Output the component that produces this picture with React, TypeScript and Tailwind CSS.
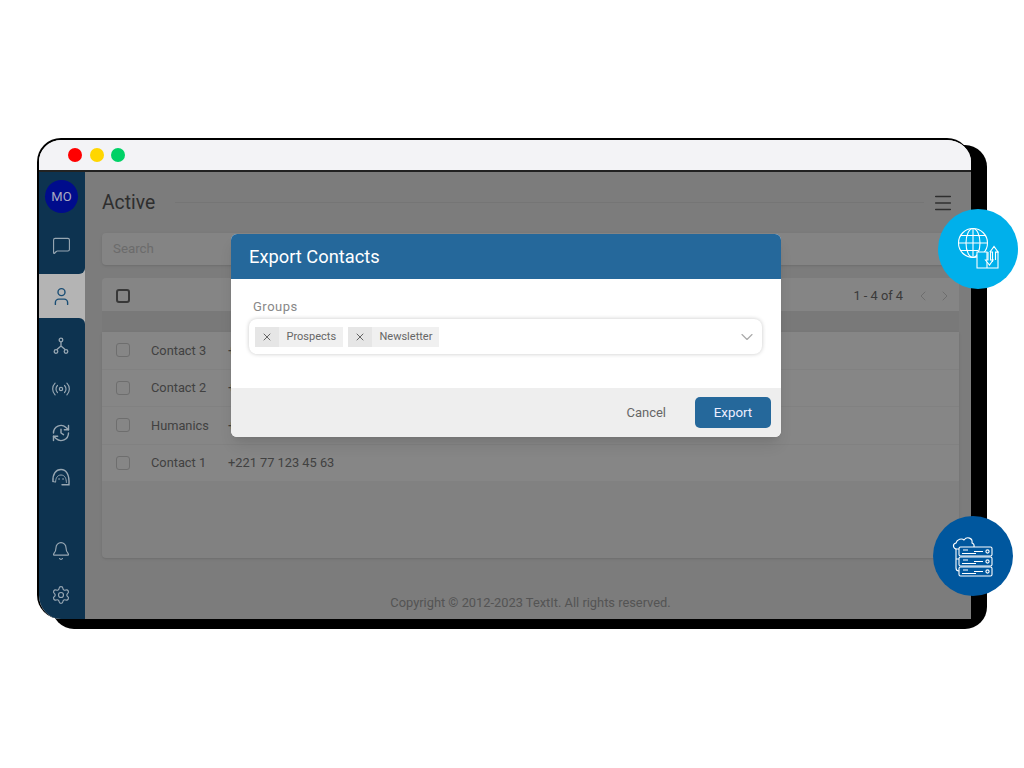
import { Bell, ChevronDown, ChevronLeft, ChevronRight, Menu, MessageSquare, Radio, Settings, User, X } from "lucide-react";

const contacts = [
  { name: "Contact 3", phone: "+221 77 123 45 66" },
  { name: "Contact 2", phone: "+221 77 123 45 65" },
  { name: "Humanics", phone: "+221 77 123 45 64" },
  { name: "Contact 1", phone: "+221 77 123 45 63" },
];

const FlowIcon = () => (
  <svg width="16" height="18" viewBox="0 0 16 18" fill="none" stroke="currentColor" strokeWidth="1.3">
    <circle cx="8" cy="3" r="1.8" />
    <circle cx="3" cy="14.5" r="1.8" />
    <circle cx="13" cy="14.5" r="1.8" />
    <path d="M8 4.8V9M8 9L3.6 12.8M8 9L12.4 12.8" />
  </svg>
);

const HeadsetIcon = () => (
  <svg width="20" height="20" viewBox="0 0 20 20" fill="none" stroke="currentColor" strokeWidth="1.4" strokeLinecap="round">
    <path d="M2 14.5C1.4 7 5 2.5 10 2.5C15 2.5 18.6 7 18 17.8H11" />
    <path d="M2 14.5L4.6 15.2C4.6 11.5 6.2 8 10 8C13.8 8 15.4 11.5 15.4 15.4" strokeWidth="1" />
    <path d="M8 12H8.1M12 12H12.1" strokeWidth="1.6" />
  </svg>
);

const ClockRefreshIcon = () => (
  <svg width="20" height="20" viewBox="0 0 24 24" fill="none" stroke="currentColor" strokeWidth="1.7" strokeLinecap="round" strokeLinejoin="round">
    <path d="M3 12a9 9 0 0 1 15-6.7L21 8" />
    <path d="M21 3v5h-5" />
    <path d="M21 12a9 9 0 0 1-15 6.7L3 16" />
    <path d="M3 21v-5h5" />
    <path d="M12 7.5V12l3 2" />
  </svg>
);

const GlobeIcon = () => (
  <svg width="44" height="44" viewBox="0 0 44 44" fill="none" stroke="white" strokeWidth="1.1">
    <circle cx="17" cy="16" r="14.5" />
    <ellipse cx="17" cy="16" rx="7" ry="14.5" />
    <path d="M17 1.5V30.5M2.5 16H31.5M4.5 8.5H29.5M4.5 23.5H22" />
    <path d="M21 25H31V41H21ZM31 41H42V25H40" fill="#00b0eb" />
    <path d="M36.5 35V25H34L38 19.5L42 25H39.5V33" fill="#00b0eb" />
    <path d="M32 25V33H29.5L33.5 38L37 33H34.5V25" fill="#00b0eb" />
  </svg>
);

const ServersIcon = () => (
  <svg width="42" height="42" viewBox="0 0 42 42" fill="none" stroke="white" strokeWidth="1.1">
    <path d="M5 14C1 14 0 9 4 8C5 4 10 3 12 5C15 1 21 3 20 8C23 9 23 14 19 14Z" />
    <path d="M4 14V33C4 35 5 36 7 36M4 24H7" />
    <rect x="7" y="12" width="33" height="9" rx="1.5" fill="#00579e" />
    <rect x="7" y="22" width="33" height="9" rx="1.5" fill="#00579e" />
    <rect x="7" y="32" width="33" height="9" rx="1.5" fill="#00579e" />
    <path d="M11 15H16M22 16.5H31M11 25H16M22 26.5H31M11 35H16M22 36.5H31M10 18.5H24M10 28.5H24M10 38.5H24" />
    <circle cx="35.5" cy="16.5" r="1.6" />
    <circle cx="35.5" cy="26.5" r="1.6" />
    <circle cx="35.5" cy="36.5" r="1.6" />
  </svg>
);

const Tag = ({ label, width }: { label: string; width: string }) => (
  <div className={`flex h-5 ${width} items-center bg-[#f0f0f0] text-[11px] text-[#666]`}>
    <div className="flex h-5 w-6 shrink-0 items-center justify-center bg-[#e6e6e6]">
      <X size={12} strokeWidth={1.8} className="text-[#555]" />
    </div>
    <span className="mt-[2px] pl-[7.5px]">{label}</span>
  </div>
);

const SideItem = ({ children, className = "" }: { children: React.ReactNode; className?: string }) => (
  <div className={`flex items-center justify-center pr-[2px] text-[#f4f4f4] opacity-60 ${className}`}>{children}</div>
);

export default function App() {
  return (
    <div className="h-[768px] w-[1024px] overflow-hidden bg-white pl-[37px] pt-[138px] font-['Roboto',sans-serif]">
      <div className="relative h-[481px] w-[934px]">
        {/* black offset behind the window */}
        <div className="absolute left-[15px] top-[7px] h-[484px] w-[935px] rounded-[22px] bg-black" />

        <div className="relative flex h-[481px] w-[934px] flex-col overflow-hidden rounded-t-[24px] rounded-bl-[24px] border-2 border-b-0 border-r-0 border-black bg-white">
          <div className="flex h-[32px] shrink-0 items-center gap-[7.5px] border-b-2 border-[#222] bg-[#f3f3f6] pl-[29px]">
            <span className="h-[14px] w-[14px] rounded-full bg-[#ff0000]" />
            <span className="h-[14px] w-[14px] rounded-full bg-[#ffd600]" />
            <span className="h-[14px] w-[14px] rounded-full bg-[#00d166]" />
          </div>

          <div className="relative flex min-h-0 flex-1">
            {/* sidebar */}
            <div className="relative z-10 flex w-[46px] shrink-0 flex-col bg-[#b4b4b4]">
              <div className="h-[102px] shrink-0 rounded-br-[6px] bg-[#0d3350] pt-[8px]">
                <div className="ml-[6px] flex h-[33px] w-[33px] items-center justify-center rounded-full bg-[#000c8c] text-[13px] text-[#a8a8c0]">
                  MO
                </div>
                <SideItem className="mt-[20px] h-[24px]">
                  <MessageSquare size={19} strokeWidth={1.4} />
                </SideItem>
              </div>
              <div className="flex h-[44px] shrink-0 items-center justify-center pr-[2px] text-[#1a4e75]">
                <User size={21} strokeWidth={1.6} />
              </div>
              <div className="min-h-0 flex-1 rounded-tr-[6px] bg-[#0d3350]">
                <SideItem className="mt-[18px] h-[20px]">
                  <FlowIcon />
                </SideItem>
                <SideItem className="mt-[23px] h-[20px]">
                  <Radio size={20} strokeWidth={1.4} />
                </SideItem>
                <SideItem className="mt-[24px] h-[20px]">
                  <ClockRefreshIcon />
                </SideItem>
                <SideItem className="mt-[24px] h-[20px]">
                  <HeadsetIcon />
                </SideItem>
                <SideItem className="mt-[54px] h-[20px]">
                  <Bell size={20} strokeWidth={1.4} />
                </SideItem>
                <SideItem className="mt-[24px] h-[20px]">
                  <Settings size={20} strokeWidth={1.4} />
                </SideItem>
              </div>
            </div>

            {/* contacts page */}
            <div className="flex min-w-0 flex-1 flex-col bg-[#e2e2e2] pl-[17px] pr-[12px]">
              <div className="flex h-[61px] shrink-0 items-center">
                <h1 className="mt-[1px] text-[19.3px] text-[#555]">Active</h1>
                <div className="ml-[20px] h-px flex-1 bg-[#d6d6d6]" />
                <Menu size={22} strokeWidth={1.6} className="ml-[8px] mr-[5px] text-[#555]" />
              </div>
              <div className="flex h-[32px] shrink-0 items-center rounded bg-[#f0f0f0] pl-[11px] text-[13.3px] text-[#c4c4c4] shadow-sm">
                Search
              </div>
              <div className="mt-[13px] flex h-[33px] shrink-0 items-center justify-between rounded-t bg-[#f2f2f2] pl-[14px] pr-[6px] pt-[3px]">
                <span className="h-[14px] w-[14px] rounded-[3px] border-2 border-[#666]" />
                <div className="flex items-center gap-[6px] text-[12.8px] text-[#6a6a6a]">
                  1 - 4 of 4
                  <ChevronLeft size={16} strokeWidth={1.3} className="ml-[6px] text-[#c0c0c0]" />
                  <ChevronRight size={16} strokeWidth={1.3} className="text-[#c0c0c0]" />
                </div>
              </div>
              <div className="h-[21px] shrink-0 bg-[#dcdcdc]" />
              <div className="h-[226px] shrink-0 rounded-b bg-[#ebebeb] shadow-sm">
                {contacts.map((c) => (
                  <div key={c.name} className="flex h-[37.5px] items-center border-b border-[#ebebeb] bg-[#f4f4f4] pl-[14px] text-[12.8px] text-[#777]">
                    <span className="h-[14px] w-[14px] rounded-[3px] border border-[#c8c8c8]" />
                    <span className="ml-[21px] w-[77px]">{c.name}</span>
                    <span>{c.phone}</span>
                  </div>
                ))}
              </div>
              <div className="flex flex-1 items-end justify-center pb-[7px] text-[12.85px] text-[#999]">
                Copyright © 2012-2023 TextIt. All rights reserved.
              </div>
            </div>

            {/* dialog backdrop */}
            <div className="absolute inset-0 bg-black/45" />

            {/* export dialog */}
            <div className="absolute left-[192px] top-[62px] flex h-[203px] w-[550px] flex-col overflow-hidden rounded-[6px] bg-white shadow-lg">
              <div className="flex h-[45px] shrink-0 items-center bg-[#25689b] pl-[18px] text-[18.3px] text-white">
                Export Contacts
              </div>
              <div className="flex-1 pl-[18px] pr-[19px] pt-[21px]">
                <div className="pl-[4px] text-[13px] leading-[14px] tracking-[0.5px] text-[#888]">Groups</div>
                <div className="mt-[5px] flex h-[35px] items-center gap-[5px] rounded-lg bg-white pl-[6px] pr-[5px] shadow-[0_0_4px_rgba(0,0,0,0.22)]">
                  <Tag label="Prospects" width="w-[88px]" />
                  <Tag label="Newsletter" width="w-[91px]" />
                  <ChevronDown size={20} strokeWidth={1.4} className="ml-auto text-[#aaa]" />
                </div>
              </div>
              <div className="flex h-[49px] shrink-0 items-center justify-end bg-[#eeeeee] pr-[10px]">
                <span className="text-[13px] text-[#666]">Cancel</span>
                <button className="ml-[29px] h-[31px] w-[76px] rounded-[5px] bg-[#25689b] text-[13.3px] text-[#eef]">Export</button>
              </div>
            </div>
          </div>
        </div>

        {/* floating badges */}
        <div className="absolute left-[901px] top-[71px] flex h-[80px] w-[80px] items-center justify-center rounded-full bg-[#00b0eb]">
          <GlobeIcon />
        </div>
        <div className="absolute left-[896px] top-[378px] flex h-[80px] w-[80px] items-center justify-center rounded-full bg-[#00579e]">
          <ServersIcon />
        </div>
      </div>
    </div>
  );
}
